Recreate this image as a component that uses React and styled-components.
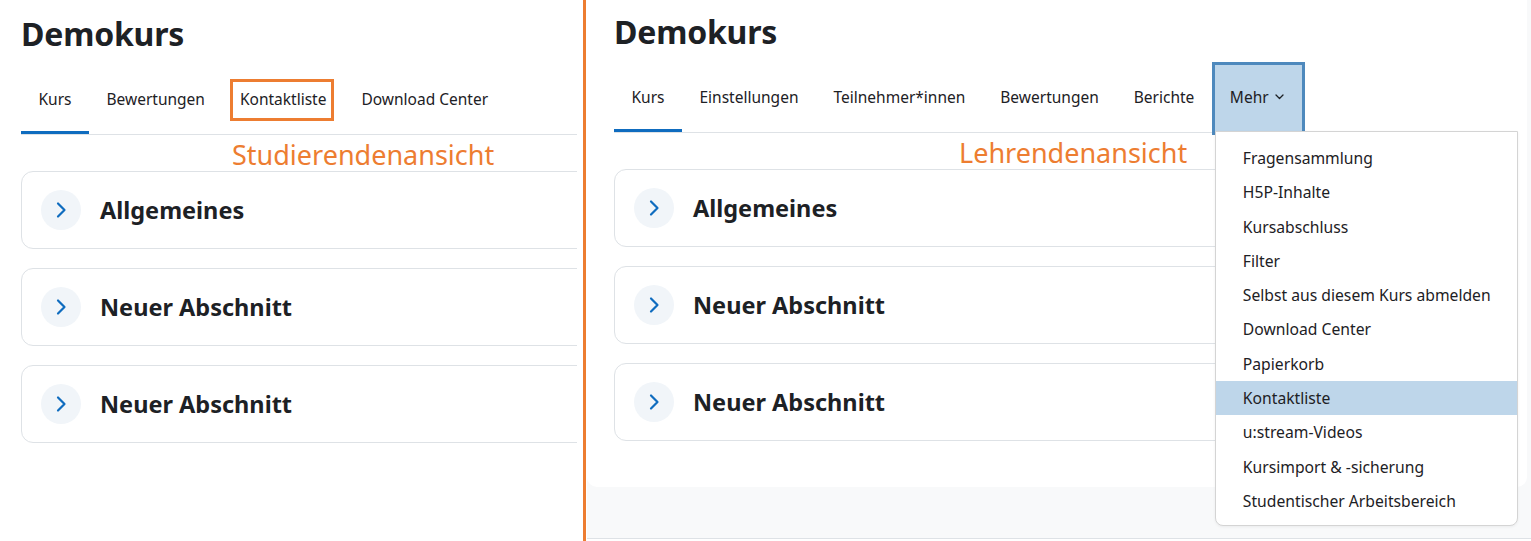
import React from "react";
import styled, { createGlobalStyle } from "styled-components";

const GlobalStyle = createGlobalStyle`
	* {
		box-sizing: border-box;
	}
	body {
		margin: 0;
		background: #fff;
		font-family: "Noto Sans", "Open Sans", Arial, sans-serif;
		color: #1d2125;
	}
`;

const ORANGE = "#ed7d31";
const BLUE = "#0f6cbf";

const Page = styled.div`
	display: flex;
	height: 541px;
	overflow: hidden;
`;

const LeftPanel = styled.div`
	width: 577px;
	flex: none;
	overflow: hidden;
`;

const Divider = styled.div`
	width: 3px;
	flex: none;
	margin: 0 1px 0 6px;
	background: ${ORANGE};
`;

const RightPanel = styled.div`
	flex: 1;
	height: 539px;
	background: #f8f9fa;
	border-bottom: 1px solid #dee2e6;
`;

const Main = styled.div`
	width: ${(p) => p.$width || "auto"};
	margin-right: ${(p) => p.$gutter || 0}px;
	padding: ${(p) => p.$top}px ${(p) => p.$right}px ${(p) => p.$bottom}px ${(p) => p.$left}px;
	background: #fff;
	border-radius: 0 0 10px 10px;
`;

const Title = styled.h1`
	margin: 0 0 10px;
	font-size: 32px;
	line-height: 40px;
	font-weight: 700;
	letter-spacing: -0.2px;
`;

const TabBar = styled.nav`
	display: flex;
	height: 71px;
	border-bottom: 1px solid #dee2e6;
`;

const Tab = styled.div`
	position: relative;
	display: flex;
	align-items: center;
	height: 70px;
	padding: 0 17.5px;
	font-size: 15.5px;
	white-space: nowrap;

	${(p) =>
		p.$active &&
		`
		&::after {
			content: "";
			position: absolute;
			left: 0;
			right: 0;
			bottom: 0;
			height: 3px;
			background: ${BLUE};
		}
	`}

	${(p) =>
		p.$boxed &&
		`
		&::before {
			content: "";
			position: absolute;
			left: 8px;
			right: 10px;
			top: 15px;
			bottom: 13px;
			border: 3px solid ${ORANGE};
		}
	`}
`;

const MoreTab = styled.div`
	position: relative;
	display: flex;
	align-items: center;
	gap: 6px;
	height: 73px;
	padding: 0 18px 3px 15px;
	font-size: 15.5px;
	background: #bed6ea;
	border: 3px solid #4e89bd;
`;

const Dropdown = styled.ul`
	position: absolute;
	top: 66px;
	left: 0;
	z-index: 5;
	width: 303px;
	margin: 0;
	padding: 9px 0 7px;
	list-style: none;
	background: #fff;
	border: 1px solid #d4d4d4;
	border-radius: 0 0 8px 8px;
	box-shadow: 0 1px 3px rgba(0, 0, 0, 0.06);
`;

const DropItem = styled.li`
	padding: 5px 27px;
	line-height: 24.3px;
	font-size: 15.7px;
	white-space: nowrap;
	background: ${(p) => (p.$highlight ? "#bed6ea" : "transparent")};
`;

const Note = styled.div`
	margin-top: 4px;
	padding-left: ${(p) => p.$indent}px;
	font-size: 27px;
	line-height: 32px;
	color: ${ORANGE};
	white-space: nowrap;
`;

const SectionList = styled.div`
	display: flex;
	flex-direction: column;
	gap: 19px;
`;

const Section = styled.div`
	display: flex;
	align-items: center;
	gap: 19px;
	height: 78px;
	padding: 0 19px;
	border: 1px solid #dee2e6;
	border-radius: 12px;
`;

const Toggle = styled.span`
	display: flex;
	align-items: center;
	justify-content: center;
	width: 40px;
	height: 40px;
	border-radius: 50%;
	background: #f1f5f9;
`;

const SectionTitle = styled.h3`
	margin: 0;
	font-size: 23.5px;
	font-weight: 700;
`;

const ChevronRight = () => (
	<svg width="12" height="18" viewBox="0 0 12 18" fill="none">
		<path d="M3 2.5 L9.5 9 L3 15.5" stroke={BLUE} strokeWidth="2.2" strokeLinecap="round" strokeLinejoin="round" />
	</svg>
);

const ChevronDown = () => (
	<svg width="9" height="6" viewBox="0 0 9 6" fill="none">
		<path d="M1 1 L4.5 4.5 L8 1" stroke="#1d2125" strokeWidth="1.3" strokeLinecap="round" strokeLinejoin="round" />
	</svg>
);

const sections = ["Allgemeines", "Neuer Abschnitt", "Neuer Abschnitt"];

const moreItems = [
	"Fragensammlung",
	"H5P-Inhalte",
	"Kursabschluss",
	"Filter",
	"Selbst aus diesem Kurs abmelden",
	"Download Center",
	"Papierkorb",
	"Kontaktliste",
	"u:stream-Videos",
	"Kursimport & -sicherung",
	"Studentischer Arbeitsbereich",
];

const Sections = () => (
	<SectionList>
		{sections.map((s, i) => (
			<Section key={i}>
				<Toggle>
					<ChevronRight />
				</Toggle>
				<SectionTitle>{s}</SectionTitle>
			</Section>
		))}
	</SectionList>
);

const App = () => {
	return (
		<>
			<GlobalStyle />
			<Page>
				<LeftPanel>
					<Main $width="680px" $top={14} $right={0} $bottom={0} $left={21}>
						<Title>Demokurs</Title>
						<TabBar>
							<Tab $active>Kurs</Tab>
							<Tab>Bewertungen</Tab>
							<Tab $boxed>Kontaktliste</Tab>
							<Tab>Download Center</Tab>
						</TabBar>
						<Note $indent={211}>Studierendenansicht</Note>
						<Sections />
					</Main>
				</LeftPanel>
				<Divider />
				<RightPanel>
					<Main $gutter={4} $top={12} $right={28} $bottom={46} $left={27}>
						<Title>Demokurs</Title>
						<TabBar>
							<Tab $active>Kurs</Tab>
							<Tab>Einstellungen</Tab>
							<Tab>Teilnehmer*innen</Tab>
							<Tab>Bewertungen</Tab>
							<Tab>Berichte</Tab>
							<MoreTab>
								Mehr
								<ChevronDown />
								<Dropdown>
									{moreItems.map((item) => (
										<DropItem key={item} $highlight={item === "Kontaktliste"}>
											{item}
										</DropItem>
									))}
								</Dropdown>
							</MoreTab>
						</TabBar>
						<Note $indent={345}>Lehrendenansicht</Note>
						<Sections />
					</Main>
				</RightPanel>
			</Page>
		</>
	);
};

export default App;
